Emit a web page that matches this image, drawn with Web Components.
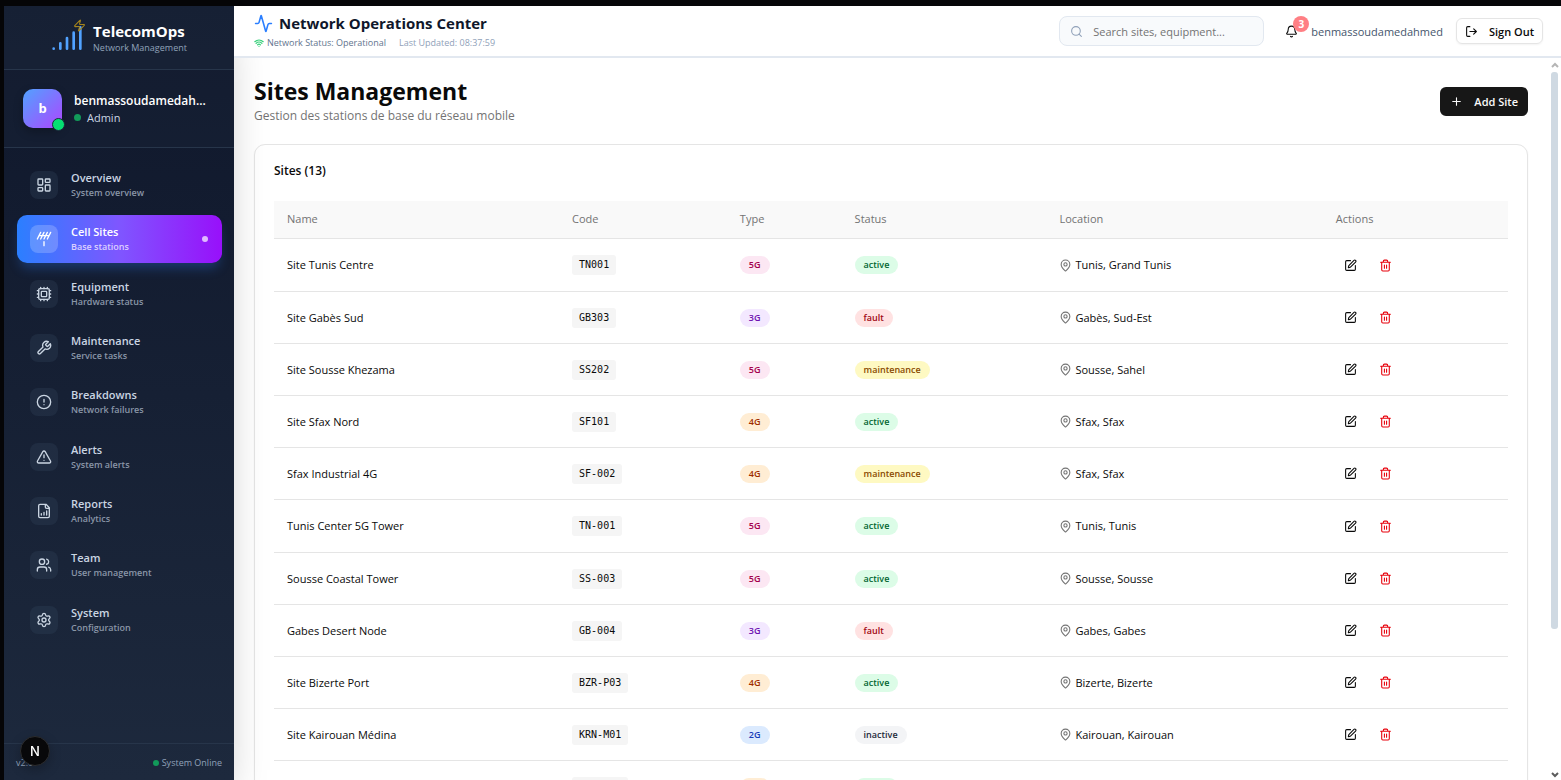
<!DOCTYPE html>
<html lang="en">
<head>
<meta charset="utf-8">
<meta name="viewport" content="width=device-width, initial-scale=1">
<title>TelecomOps - Sites Management</title>
<style>
  html, body { height: 100%; margin: 0; }
  body {
    font-family: "Open Sans", "Noto Sans", sans-serif;
    font-size: 11px;
    color: #0a0a0a;
    background: #060608;
  }
</style>
</head>
<body>
<ops-shell>
  <ops-sidebar slot="sidebar">
    <ops-nav-item icon="dashboard" label="Overview">System overview</ops-nav-item>
    <ops-nav-item icon="antenna" label="Cell Sites" active>Base stations</ops-nav-item>
    <ops-nav-item icon="cpu" label="Equipment">Hardware status</ops-nav-item>
    <ops-nav-item icon="wrench" label="Maintenance">Service tasks</ops-nav-item>
    <ops-nav-item icon="alert" label="Breakdowns">Network failures</ops-nav-item>
    <ops-nav-item icon="triangle" label="Alerts">System alerts</ops-nav-item>
    <ops-nav-item icon="report" label="Reports">Analytics</ops-nav-item>
    <ops-nav-item icon="users" label="Team">User management</ops-nav-item>
    <ops-nav-item icon="settings" label="System">Configuration</ops-nav-item>
  </ops-sidebar>
  <ops-header slot="header"></ops-header>
  <ops-page slot="page">
    <span slot="title">Sites Management</span>
    <span slot="subtitle">Gestion des stations de base du réseau mobile</span>
    <ops-card>
      <span slot="title">Sites (13)</span>
      <ops-site-table></ops-site-table>
    </ops-card>
  </ops-page>
</ops-shell>

<template id="ops-shell">
  <style>
    :host { display: grid; grid-template-columns: 230px minmax(0, 1fr); height: 100vh; box-sizing: border-box; padding: 6px 0 0 4px; overflow: hidden; }
    .side { position: relative; z-index: 1; min-height: 0; }
    .main { display: grid; grid-template-rows: auto minmax(0, 1fr); min-height: 0; background: #fff; }
    .head { position: relative; z-index: 2; }
    .body { display: grid; grid-template-columns: minmax(0, 1fr) 13px; min-height: 0; }
    .scroll { position: relative; z-index: 0; overflow: hidden; min-height: 0; }
    .dev { position: fixed; left: 20px; bottom: 14px; z-index: 3; width: 30px; height: 30px; box-sizing: border-box; padding: 0; border: 1px solid #2c2c2e; border-radius: 50%; background: #08080a; color: #fff; font: 500 13px/28px Inter, sans-serif; text-align: center; box-shadow: 0 4px 12px rgba(0,0,0,.25); }
  </style>
  <div class="side"><slot name="sidebar"></slot></div>
  <div class="main">
    <div class="head"><slot name="header"></slot></div>
    <div class="body">
      <div class="scroll"><slot name="page"></slot></div>
      <ops-scrollbar></ops-scrollbar>
    </div>
  </div>
  <button class="dev" type="button" aria-label="Open Next.js Dev Tools">N</button>
</template>

<template id="ops-scrollbar">
  <style>
    :host { display: flex; flex-direction: column; align-items: center; box-sizing: border-box; padding: 4px 0 2px; gap: 4px; background: #fff; }
    .track { flex: 1; width: 7px; }
    .thumb { height: 80%; border-radius: 3px; background: #cfd9e2; }
    svg { display: block; }
  </style>
  <svg width="8" height="6" viewBox="0 0 8 6" fill="none" stroke="#b5b5b5" stroke-width="2"><path d="M1 5l3-3 3 3"/></svg>
  <div class="track"><div class="thumb"></div></div>
  <svg width="8" height="6" viewBox="0 0 8 6" fill="none" stroke="#5c5c5c" stroke-width="2"><path d="M1 1l3 3 3-3"/></svg>
</template>

<template id="ops-sidebar">
  <style>
    :host { display: flex; flex-direction: column; height: 100%; background: linear-gradient(#0f172b, #1d293d); box-shadow: 0 20px 40px -10px rgba(0,0,0,.25); }
    .brand { display: flex; align-items: center; justify-content: center; gap: 10px; height: 63px; border-bottom: 1px solid #27354a; background: rgba(29,41,61,.5); }
    .logo { position: relative; display: flex; }
    .bars { color: #51a2ff; }
    .zap { position: absolute; top: -3px; right: -3px; color: #a5841c; }
    .name { font-size: 15px; line-height: 20px; font-weight: 700; color: #fff; }
    .tag { font-size: 9px; line-height: 13px; color: #90a1b9; }
    .user { display: flex; align-items: center; gap: 12px; height: 77px; padding: 0 19px; border-bottom: 1px solid #27354a; background: rgba(29,41,61,.3); }
    .avatar { position: relative; flex: none; width: 39px; height: 39px; border-radius: 10px; background: linear-gradient(135deg, #51a2ff, #ad46ff); color: #fff; font-size: 13px; font-weight: 700; line-height: 39px; text-align: center; box-shadow: 0 4px 10px rgba(0,0,0,.25); }
    .avatar i { position: absolute; right: -3px; bottom: -3px; width: 11px; height: 11px; border: 1px solid #1d293d; border-radius: 50%; background: #05df72; }
    .who { min-width: 0; line-height: 17px; }
    .who b { display: block; font-size: 12px; font-weight: 600; color: #fff; overflow: hidden; text-overflow: ellipsis; white-space: nowrap; }
    .role { display: flex; align-items: center; gap: 6px; font-size: 11px; color: #cad5e2; }
    .dot { width: 7px; height: 7px; border-radius: 50%; background: #129a5a; }
    nav { flex: 1; padding: 13px 12px 0 13px; min-height: 0; }
    footer { display: flex; justify-content: space-between; padding: 12px 12px 10px; border-top: 1px solid #27354a; font-size: 9px; line-height: 14px; color: #90a1b9; }
    .on { display: flex; align-items: center; gap: 3px; }
    .on .dot { width: 6px; height: 6px; }
  </style>
  <div class="brand">
    <div class="logo"><ops-icon class="bars" name="signal" size="32"></ops-icon><ops-icon class="zap" name="zap" size="13"></ops-icon></div>
    <div><div class="name">TelecomOps</div><div class="tag">Network Management</div></div>
  </div>
  <div class="user">
    <div class="avatar">b<i></i></div>
    <div class="who"><b>benmassoudamedahmed</b><div class="role"><span class="dot"></span>Admin</div></div>
  </div>
  <nav aria-label="Main"><slot></slot></nav>
  <footer><span>v2.0</span><span class="on"><span class="dot"></span>System Online</span></footer>
</template>

<template id="ops-nav-item">
  <style>
    :host { display: block; margin-bottom: 6px; }
    :host(:nth-of-type(3n+2)) { margin-bottom: 7px; }
    a { display: flex; align-items: center; gap: 13px; height: 48px; padding: 0 13px; border-radius: 10px; color: #cad5e2; text-decoration: none; }
    .box { display: flex; align-items: center; justify-content: center; width: 28px; height: 28px; border-radius: 8px; background: rgba(49,65,88,.35); }
    .text { flex: 1; }
    .label { font-size: 11px; line-height: 14px; font-weight: 600; }
    .sub { font-size: 9px; line-height: 15px; font-weight: 600; color: #8a96a8; }
    i { display: none; width: 6px; height: 6px; border-radius: 50%; background: rgba(255,255,255,.7); }
    :host([active]) a { background: linear-gradient(90deg, #2b7fff, #7f56ff 50%, #9810fa); color: #fff; box-shadow: 0 8px 12px -3px rgba(43,127,255,.3); }
    :host([active]) .box { background: rgba(255,255,255,.2); }
    :host([active]) .sub { color: #dccfff; }
    :host([active]) i { display: block; margin-right: 1px; }
  </style>
  <a href="#"><span class="box"><ops-icon size="16"></ops-icon></span><span class="text"><div class="label"></div><div class="sub"><slot></slot></div></span><i></i></a>
</template>

<template id="ops-header">
  <style>
    :host { display: flex; align-items: center; justify-content: space-between; height: 50px; padding: 0 18px 0 20px; background: #fff; border-bottom: 2px solid #e2e8f0; }
    h1 { display: flex; align-items: center; gap: 6px; margin: 0 0 2px; font-size: 15px; line-height: 22px; font-weight: 700; color: #0f172b; }
    h1 ops-icon { color: #2b7fff; }
    .meta { display: flex; gap: 13px; font-size: 9px; line-height: 14px; color: #90a1b9; }
    .net { display: flex; align-items: center; gap: 3px; color: #62748e; }
    .net ops-icon { color: #37d07a; }
    .right { display: flex; align-items: center; }
    .search { display: flex; align-items: center; gap: 10px; box-sizing: border-box; width: 205px; height: 30px; padding: 0 10px; border: 1px solid #e2e8f0; border-radius: 8px; background: #f8fafc; color: #90a1b9; }
    input { flex: 1; min-width: 0; padding: 0; border: 0; outline: 0; background: none; font: inherit; color: #0a0a0a; }
    input::placeholder { color: #737373; opacity: 1; }
    button { font: inherit; color: inherit; background: none; border: 0; padding: 0; }
    .bell { position: relative; display: flex; margin: 0 13px 0 21px; color: #0a0a0a; }
    .bell b { position: absolute; left: 8px; top: -9px; width: 16px; height: 16px; border-radius: 50%; background: #ff7f84; color: #fff; font-size: 10px; line-height: 16px; font-weight: 700; }
    .user { color: #45556c; }
    .out { display: flex; align-items: center; gap: 11px; height: 26px; margin-left: 13px; padding: 0 8px; border: 1px solid #e5e5e5; border-radius: 6px; font-weight: 600; box-shadow: 0 1px 2px rgba(0,0,0,.05); }
  </style>
  <div>
    <h1><ops-icon name="activity" size="19"></ops-icon>Network Operations Center</h1>
    <div class="meta"><span class="net"><ops-icon name="wifi" size="10" weight="3"></ops-icon>Network Status: Operational</span><span>Last Updated: 08:37:59</span></div>
  </div>
  <div class="right">
    <label class="search"><ops-icon name="search" size="13"></ops-icon><input type="search" aria-label="Search sites, equipment" placeholder="Search sites, equipment..."></label>
    <button class="bell" type="button" aria-label="Notifications"><ops-icon name="bell" size="13"></ops-icon><b>3</b></button>
    <span class="user">benmassoudamedahmed</span>
    <button class="out" type="button"><ops-icon name="logout" size="13"></ops-icon>Sign Out</button>
  </div>
</template>

<template id="ops-page">
  <style>
    :host { display: block; padding: 19px 20px; }
    .top { display: flex; align-items: center; justify-content: space-between; margin-bottom: 19px; }
    h2 { margin: 0; font-size: 23px; line-height: 29px; font-weight: 700; }
    p { margin: 0; font-size: 12px; line-height: 19px; color: #737373; }
    button { display: flex; align-items: center; gap: 11px; height: 29px; padding: 0 10px; border: 0; border-radius: 6px; background: #171717; color: #fafafa; font: inherit; font-weight: 600; }
  </style>
  <div class="top">
    <div><h2><slot name="title"></slot></h2><p><slot name="subtitle"></slot></p></div>
    <button type="button"><ops-icon name="plus" size="13"></ops-icon>Add Site</button>
  </div>
  <slot></slot>
</template>

<template id="ops-card">
  <style>
    :host { display: block; padding: 16px 19px 19px; border: 1px solid #e5e5e5; border-radius: 11px; background: #fff; box-shadow: 0 1px 2px rgba(0,0,0,.06); }
    h3 { margin: 0 0 21px; font-size: 12px; line-height: 19px; font-weight: 600; }
  </style>
  <h3><slot name="title"></slot></h3>
  <slot></slot>
</template>

<template id="ops-badge">
  <style>
    :host { display: inline-block; padding: 0 9px; border-radius: 9px; font-size: 9px; line-height: 18px; font-weight: 600; vertical-align: middle; color: #1e2939; background: #f3f4f6; }
    :host([tone="5G"]) { color: #a3004c; background: #fce7f3; }
    :host([tone="4G"]) { color: #9f2d00; background: #ffedd4; }
    :host([tone="3G"]) { color: #6e11b0; background: #f3e8ff; }
    :host([tone="2G"]) { color: #193cb8; background: #dbeafe; }
    :host([tone="active"]) { color: #016630; background: #dcfce7; }
    :host([tone="fault"]) { color: #9f0712; background: #ffe2e2; }
    :host([tone="maintenance"]) { color: #894b00; background: #fef9c2; }
  </style>
  <slot></slot>
</template>

<template id="ops-site-table">
  <style>
    :host { display: block; }
    table { width: 100%; table-layout: fixed; border-collapse: separate; border-spacing: 0; font-size: 11px; line-height: 16px; }
    th, td { box-sizing: border-box; padding: 0 13px; text-align: left; border-bottom: 1px solid #e5e5e5; white-space: nowrap; }
    th { height: 38px; padding-bottom: 2px; background: #f9f9f9; color: #737373; font-weight: 500; }
    td { height: 52px; }
    tr:nth-child(5n+1) td { height: 53px; }
    td:first-child { font-weight: 500; }
    code { display: inline-block; padding: 0 7px; border-radius: 3px; background: #f5f5f5; font: 10px/20px "DejaVu Sans Mono", monospace; }
    .loc, .act { display: flex; align-items: center; gap: 3px; }
    .loc ops-icon { color: #737373; }
    .act { gap: 6px; }
    button { display: flex; align-items: center; justify-content: center; width: 29px; height: 29px; padding: 0; border: 0; background: none; color: #0a0a0a; }
    button.del { color: #e7000b; }
    .c1 { width: 23.1% } .c2 { width: 13.6% } .c3 { width: 9.3% } .c4 { width: 16.6% } .c5 { width: 22.4% } .c6 { width: 15% }
  </style>
  <table>
    <colgroup><col class="c1"><col class="c2"><col class="c3"><col class="c4"><col class="c5"><col class="c6"></colgroup>
    <thead><tr><th>Name</th><th>Code</th><th>Type</th><th>Status</th><th>Location</th><th>Actions</th></tr></thead>
    <tbody></tbody>
  </table>
</template>

<script>
const ICONS = {
  dashboard: '<rect x="3" y="3" width="7" height="9" rx="1"/><rect x="14" y="3" width="7" height="5" rx="1"/><rect x="14" y="12" width="7" height="9" rx="1"/><rect x="3" y="16" width="7" height="5" rx="1"/>',
  antenna: '<path d="M2 12 7 2M7 12l5-10M12 12l5-10M17 12l5-10M4.5 7h15M12 16v6"/>',
  cpu: '<path d="M12 20v2M12 2v2M17 20v2M17 2v2M2 12h2M2 17h2M2 7h2M20 12h2M20 17h2M20 7h2M7 20v2M7 2v2"/><rect x="4" y="4" width="16" height="16" rx="2"/><rect x="8" y="8" width="8" height="8" rx="1"/>',
  wrench: '<path d="M14.7 6.3a1 1 0 0 0 0 1.4l1.6 1.6a1 1 0 0 0 1.4 0l3.77-3.77a6 6 0 0 1-7.94 7.94l-6.91 6.91a2.12 2.12 0 0 1-3-3l6.91-6.91a6 6 0 0 1 7.94-7.94l-3.76 3.76z"/>',
  alert: '<circle cx="12" cy="12" r="10"/><path d="M12 8v4M12 16h.01"/>',
  triangle: '<path d="m21.73 18-8-14a2 2 0 0 0-3.48 0l-8 14A2 2 0 0 0 4 21h16a2 2 0 0 0 1.73-3M12 9v4M12 17h.01"/>',
  report: '<path d="M15 2H6a2 2 0 0 0-2 2v16a2 2 0 0 0 2 2h12a2 2 0 0 0 2-2V7ZM14 2v4a2 2 0 0 0 2 2h4M8 18v-2M12 18v-4M16 18v-6"/>',
  users: '<path d="M16 21v-2a4 4 0 0 0-4-4H6a4 4 0 0 0-4 4v2M16 3.128a4 4 0 0 1 0 7.744M22 21v-2a4 4 0 0 0-3-3.87"/><circle cx="9" cy="7" r="4"/>',
  settings: '<path d="M9.671 4.136a2.34 2.34 0 0 1 4.659 0 2.34 2.34 0 0 0 3.319 1.915 2.34 2.34 0 0 1 2.33 4.033 2.34 2.34 0 0 0 0 3.831 2.34 2.34 0 0 1-2.33 4.033 2.34 2.34 0 0 0-3.319 1.915 2.34 2.34 0 0 1-4.659 0 2.34 2.34 0 0 0-3.32-1.915 2.34 2.34 0 0 1-2.33-4.033 2.34 2.34 0 0 0 0-3.831A2.34 2.34 0 0 1 6.35 6.051a2.34 2.34 0 0 0 3.319-1.915"/><circle cx="12" cy="12" r="3"/>',
  signal: '<path d="M2 20h.01M7 20v-4M12 20v-8M17 20V8M22 4v16"/>',
  zap: '<path d="M4 14a1 1 0 0 1-.78-1.63l9.9-10.2a.5.5 0 0 1 .86.46l-1.92 6.02A1 1 0 0 0 13 10h7a1 1 0 0 1 .78 1.63l-9.9 10.2a.5.5 0 0 1-.86-.46l1.92-6.02A1 1 0 0 0 11 14z"/>',
  activity: '<path d="M22 12h-2.48a2 2 0 0 0-1.93 1.46l-2.35 8.36a.25.25 0 0 1-.48 0L9.24 2.18a.25.25 0 0 0-.48 0l-2.35 8.36A2 2 0 0 1 4.49 12H2"/>',
  wifi: '<path d="M12 20h.01M2 8.82a15 15 0 0 1 20 0M5 12.859a10 10 0 0 1 14 0M8.5 16.429a5 5 0 0 1 7 0"/>',
  search: '<circle cx="11" cy="11" r="8"/><path d="m21 21-4.34-4.34"/>',
  bell: '<path d="M10.268 21a2 2 0 0 0 3.464 0M3.262 15.326A1 1 0 0 0 4 17h16a1 1 0 0 0 .74-1.673C19.41 13.956 18 12.499 18 8A6 6 0 0 0 6 8c0 4.499-1.411 5.956-2.738 7.326"/>',
  logout: '<path d="M9 21H5a2 2 0 0 1-2-2V5a2 2 0 0 1 2-2h4M16 17l5-5-5-5M21 12H9"/>',
  plus: '<path d="M5 12h14M12 5v14"/>',
  pin: '<path d="M20 10c0 4.993-5.539 10.193-7.399 11.799a1 1 0 0 1-1.202 0C9.539 20.193 4 14.993 4 10a8 8 0 0 1 16 0"/><circle cx="12" cy="10" r="3"/>',
  edit: '<path d="M12 3H5a2 2 0 0 0-2 2v14a2 2 0 0 0 2 2h14a2 2 0 0 0 2-2v-7M18.375 2.625a1 1 0 0 1 3 3l-9.013 9.014a2 2 0 0 1-.853.505l-2.873.84a.5.5 0 0 1-.62-.62l.84-2.873a2 2 0 0 1 .506-.852z"/>',
  trash: '<path d="M3 6h18M19 6v14a2 2 0 0 1-2 2H7a2 2 0 0 1-2-2V6M8 6V4a2 2 0 0 1 2-2h4a2 2 0 0 1 2 2v2M10 11v6M14 11v6"/>'
};

const SITES = [
  ['Site Tunis Centre', 'TN001', '5G', 'active', 'Tunis, Grand Tunis'],
  ['Site Gabès Sud', 'GB303', '3G', 'fault', 'Gabès, Sud-Est'],
  ['Site Sousse Khezama', 'SS202', '5G', 'maintenance', 'Sousse, Sahel'],
  ['Site Sfax Nord', 'SF101', '4G', 'active', 'Sfax, Sfax'],
  ['Sfax Industrial 4G', 'SF-002', '4G', 'maintenance', 'Sfax, Sfax'],
  ['Tunis Center 5G Tower', 'TN-001', '5G', 'active', 'Tunis, Tunis'],
  ['Sousse Coastal Tower', 'SS-003', '5G', 'active', 'Sousse, Sousse'],
  ['Gabes Desert Node', 'GB-004', '3G', 'fault', 'Gabes, Gabes'],
  ['Site Bizerte Port', 'BZR-P03', '4G', 'active', 'Bizerte, Bizerte'],
  ['Site Kairouan Médina', 'KRN-M01', '2G', 'inactive', 'Kairouan, Kairouan'],
  ['Site Nabeul Plage', 'NBL-P02', '4G', 'active', 'Nabeul, Nabeul']
];

class OpsElement extends HTMLElement {
  constructor() {
    super();
    const root = this.attachShadow({ mode: 'open' });
    const tpl = document.getElementById(this.localName);
    if (tpl) root.append(tpl.content.cloneNode(true));
  }
}

class OpsIcon extends OpsElement {
  static observedAttributes = ['name', 'size', 'weight'];
  attributeChangedCallback() {
    const s = this.getAttribute('size') || 16;
    const w = this.getAttribute('weight') || 2;
    this.shadowRoot.innerHTML = `<style>:host{display:inline-flex;flex:none}svg{display:block}</style>
      <svg width="${s}" height="${s}" viewBox="0 0 24 24" fill="none" stroke="currentColor" stroke-width="${w}" stroke-linecap="round" stroke-linejoin="round" aria-hidden="true">${ICONS[this.getAttribute('name')] || ''}</svg>`;
  }
}

class OpsNavItem extends OpsElement {
  connectedCallback() {
    this.shadowRoot.querySelector('ops-icon').setAttribute('name', this.getAttribute('icon'));
    this.shadowRoot.querySelector('.label').textContent = this.getAttribute('label');
    if (this.hasAttribute('active')) this.shadowRoot.querySelector('a').setAttribute('aria-current', 'page');
  }
}

class OpsSiteTable extends OpsElement {
  connectedCallback() {
    this.shadowRoot.querySelector('tbody').innerHTML = SITES.map(([name, code, type, status, place]) => `
      <tr><td>${name}</td><td><code>${code}</code></td>
      <td><ops-badge tone="${type}">${type}</ops-badge></td>
      <td><ops-badge tone="${status}">${status}</ops-badge></td>
      <td><div class="loc"><ops-icon name="pin" size="13"></ops-icon>${place}</div></td>
      <td><div class="act"><button type="button" aria-label="Edit ${name}"><ops-icon name="edit" size="13"></ops-icon></button><button class="del" type="button" aria-label="Delete ${name}"><ops-icon name="trash" size="13"></ops-icon></button></div></td></tr>`).join('');
  }
}

customElements.define('ops-icon', OpsIcon);
customElements.define('ops-nav-item', OpsNavItem);
customElements.define('ops-site-table', OpsSiteTable);
for (const tag of ['ops-badge', 'ops-card', 'ops-page', 'ops-header', 'ops-sidebar', 'ops-scrollbar', 'ops-shell']) {
  customElements.define(tag, class extends OpsElement {});
}
</script>
</body>
</html>
